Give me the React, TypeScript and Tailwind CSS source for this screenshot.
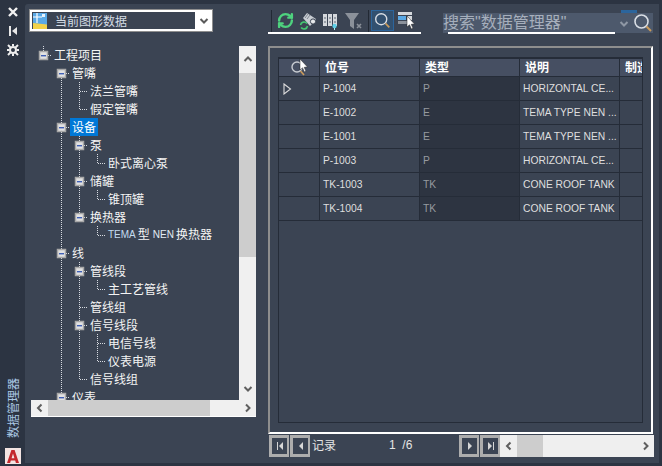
import { RefreshCw } from "lucide-react";

const cjk = "font-['Noto_Sans_CJK_SC','Liberation_Sans',sans-serif]";
const latinFirst = "font-['Liberation_Sans','Noto_Sans_CJK_SC',sans-serif]";

const treeRows: [string, string][] = [
  ["R", "工程项目"],
  [" A", "管嘴"],
  [" |T", "法兰管嘴"],
  [" |L", "假定管嘴"],
  [" B", "设备"],
  [" |B", "泵"],
  [" ||L", "卧式离心泵"],
  [" |B", "储罐"],
  [" ||L", "锥顶罐"],
  [" |E", "换热器"],
  [" | L", "TEMA"],
  [" B", "线"],
  [" |B", "管线段"],
  [" ||L", "主工艺管线"],
  [" |T", "管线组"],
  [" |B", "信号线段"],
  [" ||T", "电信号线"],
  [" ||L", "仪表电源"],
  [" |L", "信号线组"],
  [" B", "仪表"],
];

const gridRows = [
  ["P-1004", "P", "HORIZONTAL CE..."],
  ["E-1002", "E", "TEMA TYPE NEN ..."],
  ["E-1001", "E", "TEMA TYPE NEN ..."],
  ["P-1003", "P", "HORIZONTAL CE..."],
  ["TK-1003", "TK", "CONE ROOF TANK"],
  ["TK-1004", "TK", "CONE ROOF TANK"],
];

// one 18x18 cell of the tree's dotted guides
function TreeCell({ kind }: { kind: string }) {
  const dots = { stroke: "#d8dce2", strokeWidth: 1, strokeDasharray: "1 1" };
  const isBox = "RABE".includes(kind);
  return (
    <svg width="18" height="18" className="shrink-0">
      {"R|TLBE".includes(kind) && (
        <line x1="9.5" y1="0" x2="9.5" y2={kind === "|" || kind === "T" ? 18 : kind === "L" ? 9 : 5} {...dots} />
      )}
      {"AB".includes(kind) && <line x1="9.5" y1="14" x2="9.5" y2="18" {...dots} />}
      {"TL".includes(kind) && <line x1="10" y1="9.5" x2="18" y2="9.5" {...dots} />}
      {isBox && (
        <>
          <line x1="14" y1="9.5" x2="18" y2="9.5" {...dots} />
          <rect x="5.5" y="5.5" width="8" height="8" fill="#e2e2e2" stroke="#a8a8a8" strokeWidth="1.5" />
          <rect x="7" y="9" width="5" height="1.4" fill="#3f5fb5" />
        </>
      )}
    </svg>
  );
}

function Chevron({ dir, className }: { dir: "up" | "down" | "left" | "right"; className?: string }) {
  const pts = {
    up: "1.5,6 5,2.5 8.5,6",
    down: "1.5,3 5,6.5 8.5,3",
    left: "6.5,1.5 3,5 6.5,8.5",
    right: "3,1.5 6.5,5 3,8.5",
  }[dir];
  return (
    <svg width="10" height="10" viewBox="0 0 10 10" className={className}>
      <polyline points={pts} fill="none" stroke="currentColor" strokeWidth="2" />
    </svg>
  );
}

function Magnifier({ size = 20 }: { size?: number }) {
  return (
    <svg width={size} height={size} viewBox="0 0 20 20">
      <circle cx="8.5" cy="8.5" r="6.5" fill="none" stroke="#d9dee5" strokeWidth="1.6" />
      <line x1="13.5" y1="13.5" x2="18" y2="18" stroke="#c99a5b" strokeWidth="2" />
    </svg>
  );
}

function Cursor({ className }: { className?: string }) {
  return (
    <svg width="9" height="14" viewBox="0 0 9 14" className={className}>
      <path d="M1 0 L1 11 L3.5 8.8 L5.4 13 L7 12.3 L5.2 8.3 L8.5 8 Z" fill="#fff" stroke="#222" strokeWidth="0.5" />
    </svg>
  );
}

function NavButton({ glyph, open }: { glyph: "first" | "prev" | "next" | "last"; open?: boolean }) {
  return (
    <div className={`flex h-[22px] w-[20px] shrink-0 items-center justify-center border-[3px] border-r-2 border-[#adadad] ${open ? "border-r-0" : ""}`}>
      <svg width="8" height="8" viewBox="0 0 8 8" fill="#d6d6d6">
        {glyph === "first" && <path d="M1 0h1v8H1zM7 0v8L3 4z" />}
        {glyph === "prev" && <path d="M6 0v8L2 4z" />}
        {glyph === "next" && <path d="M2 0v8l4-4z" />}
        {glyph === "last" && <path d="M1 0v8l4-4zM6 0h1v8H6z" />}
      </svg>
    </div>
  );
}

export default function App() {
  return (
    <div className={`flex h-[466px] w-[662px] overflow-hidden bg-[#2c3442] ${cjk}`}>
      {/* left strip */}
      <div className="flex w-[25px] shrink-0 flex-col items-center pb-[2px] pt-[5px]">
        <svg width="12" height="12" viewBox="0 0 12 12" className="mt-[1px]">
          <path d="M2 2l8 8M10 2l-8 8" stroke="#f2f2f2" strokeWidth="2.4" />
        </svg>
        <svg width="10" height="10" viewBox="0 0 10 10" className="mt-[8px]">
          <path d="M1 0h2v10H1zM9 1v8L4 5z" fill="#e8e8e8" />
        </svg>
        <svg width="12" height="12" viewBox="0 0 12 12" className="mt-[8px]">
          <circle cx="6" cy="6" r="3" fill="none" stroke="#eee" strokeWidth="2" />
          <path d="M1 1l2.6 2.6M11 1L8.4 3.6M1 11l2.6-2.6M11 11L8.4 8.4M6 0v2M6 10v2M0 6h2M10 6h2" stroke="#eee" strokeWidth="2" />
        </svg>
        <div className="mt-auto rotate-180 text-[12px] leading-[14px] text-[#a9c6e2] [text-orientation:sideways] [writing-mode:vertical-rl]">
          数据管理器
        </div>
        <div className="mt-[10px] flex h-[16px] w-[16px] items-center justify-center bg-[#f3e4e2]">
          <svg width="12" height="13" viewBox="0 0 12 13">
            <path d="M4.4 0h3.2L12 13H8.9l-.7-2.4H3.8L3.1 13H0zM6 3.6L4.6 8.2h2.8z" fill="#c4282d" />
          </svg>
        </div>
      </div>

      {/* main panel */}
      <div className="mb-[3px] mr-[3px] mt-[4px] flex flex-1 rounded-tl-[3px] bg-[#3b4453]">
        {/* left column: source selector and tree */}
        <div className="w-[243px] shrink-0">
          <div className="ml-[4px] mt-[5px] flex h-[23px] w-[184px] border border-[#8e8e8e] bg-white">
            <div className="flex flex-1 items-center border-2 border-r-0 border-white bg-[#3b4453] pl-[1px]">
              <svg width="14" height="16" viewBox="0 0 14 16" className="shrink-0">
                <rect width="14" height="16" fill="#5aa9e6" />
                <path d="M0 10l14 1.5V16H0z" fill="#f2d24a" />
                <path d="M4 0v10M0 4h9" stroke="#fff" strokeWidth="1.2" />
                <rect x="9" y="1" width="3" height="3" fill="#e8f2fb" />
              </svg>
              <span className="ml-[8px] text-[12px] text-[#d5dde6]">当前图形数据</span>
            </div>
            <div className="flex w-[17px] items-center justify-center text-[#5a5a5a]">
              <Chevron dir="down" />
            </div>
          </div>

          <div className="ml-[6px] mt-[14px] w-[225px]">
            <div className="flex h-[354px]">
              <div className="flex-1 overflow-hidden pl-[3px]">
                {treeRows.map(([kinds, label], i) => (
                  <div key={i} className="flex h-[18px] items-center whitespace-nowrap text-[12px] leading-[18px] text-[#f4f4f4]">
                    {kinds.split("").map((k, j) => (
                      <TreeCell key={j} kind={k} />
                    ))}
                    {label === "TEMA" ? (
                      <span className={`flex items-center px-[2px] ${latinFirst}`}>
                        <span className="text-[10px] text-[#c4dcf0]">TEMA</span>
                        <span className="ml-[2px]">型</span>
                        <span className="ml-[3px] text-[10px] text-[#e2ecf4]">NEN</span>
                        <span className="ml-[2px]">换热器</span>
                      </span>
                    ) : (
                      <span className={`px-[2px] ${label === "设备" ? "bg-[#0078d7] text-white" : ""}`}>{label}</span>
                    )}
                  </div>
                ))}
              </div>
              <div className="flex w-[17px] shrink-0 flex-col bg-[#f0f0f0] text-[#5f5f5f]">
                <div className="flex h-[27px] items-center justify-center">
                  <Chevron dir="up" />
                </div>
                <div className="h-[184px] bg-[#cdcdcd]" />
                <div className="mb-[3px] mt-auto flex h-[17px] items-center justify-center">
                  <Chevron dir="down" />
                </div>
              </div>
            </div>
            <div className="flex h-[17px] items-center border-b border-white bg-[#f0f0f0] text-[#5f5f5f]">
              <div className="flex w-[17px] justify-center">
                <Chevron dir="left" />
              </div>
              <div className="h-full w-[162px] bg-[#cdcdcd]" />
              <div className="ml-auto flex w-[17px] justify-center">
                <Chevron dir="right" />
              </div>
            </div>
          </div>
        </div>

        {/* right column: toolbar, grid, pager */}
        <div className="w-[385px] shrink-0">
          <div className="flex h-[42px]">
            <div className="mt-[6px] flex h-[24px] w-[153px] items-center border-b-2 border-white pb-[1px]">
              <div className="ml-[3px] h-[22px] w-[1px] bg-[#222934]" />
              <RefreshCw size={17} strokeWidth={3.4} className="ml-[5px] text-[#4ed27e]" />
              <svg width="18" height="18" viewBox="0 0 18 18" className="ml-[5px]">
                <path d="M4 6l4-5 9 6-2 3-4 4z" fill="#c9ced4" />
                <path d="M6 6l3-4M8 7l3-4" stroke="#7d8590" />
                <circle cx="14" cy="9.5" r="2.6" fill="#e6e8ea" stroke="#3b4453" />
                <path d="M1.5 13a3.6 3.6 0 016.4-1.6M8.5 14a3.6 3.6 0 01-6.4 1.6" fill="none" stroke="#44c873" strokeWidth="1.6" />
              </svg>
              <svg width="16" height="18" viewBox="0 0 16 18" className="ml-[6px]">
                <path d="M0 2h4v12H0zM5 2h4v12H5zM10 2h4v12h-4z" fill="#d5d8dc" />
                <path d="M1 6h2M1 10h2M6 6h2M6 10h2M11 6h2M11 10h2" stroke="#5d6673" />
                <circle cx="11.5" cy="14" r="2.2" fill="#5fd0e8" />
                <rect x="11" y="16" width="1" height="2" fill="#aee" />
              </svg>
              <svg width="18" height="18" viewBox="0 0 18 18" className="ml-[6px]">
                <path d="M0 1h14L9 8v9l-4-3V8z" fill="#8b919a" />
                <path d="M12 12l4 4M16 12l-4 4" stroke="#8b919a" strokeWidth="1.6" />
              </svg>
              <div className="ml-[5px] h-[22px] w-[1px] bg-[#222934]" />
              <div className="ml-[2px] flex h-[21px] w-[23px] items-center justify-center border border-[#2c659c] bg-[#32506f]">
                <Magnifier size={17} />
              </div>
              <div className="relative ml-[4px] h-[17px] w-[16px]">
                <svg width="14" height="12" viewBox="0 0 14 12">
                  <rect width="14" height="3" fill="#d5d8dc" />
                  <rect y="4" width="8" height="4" fill="#5aa9e6" />
                  <rect x="9" y="4" width="5" height="4" fill="#d5d8dc" />
                  <rect y="9" width="14" height="3" fill="#8b919a" />
                </svg>
                <Cursor className="absolute left-[8px] top-[4px]" />
              </div>
            </div>
            <div className="relative ml-[22px] mt-[9px] flex h-[20px] w-[210px] items-center bg-[#4d596c]">
              <div className="absolute -top-[3px] left-[178px] h-[3px] w-[16px] bg-[#2c659c]" />
              <span className={`whitespace-nowrap text-[16px] leading-[20px] text-[#a6afbc] ${latinFirst}`}>搜索"数据管理器"</span>
              <Chevron dir="down" className="absolute left-[176px] top-[6px] text-[#8f98a5]" />
              <div className="absolute right-[0px] top-[0px]">
                <Magnifier size={20} />
              </div>
              <div className="absolute left-[5px] top-[19px] h-[2px] w-[167px] bg-white" />
            </div>
          </div>

          <div className="h-[388px] border-2 border-b-white border-l-[#8e8e8e] border-r-white border-t-[#8e8e8e] pb-[9px] pl-[8px] pr-[8px] pt-[9px]">
            <div className="h-full overflow-hidden border border-t-2 border-[#252c38] bg-[#3b4453] text-[10.3px] text-[#dfdfdf] font-['Liberation_Sans',sans-serif]">
              <div className="flex h-[18px] border-b border-[#252c38] bg-[#464f62] text-[12px] font-bold leading-[16px] text-white">
                <div className="relative w-[41px] shrink-0 border-r border-[#252c38]">
                  <svg width="16" height="16" viewBox="0 0 16 16" className="absolute left-[11px] top-[1px]">
                    <circle cx="7" cy="7" r="5" fill="none" stroke="#c8ccd2" strokeWidth="1.4" />
                    <line x1="10.5" y1="11" x2="14" y2="15" stroke="#c99a5b" strokeWidth="1.6" />
                  </svg>
                  <Cursor className="absolute left-[20px] top-[0px]" />
                </div>
                {["位号", "类型", "说明"].map((h) => (
                  <div key={h} className={`w-[100px] shrink-0 border-r border-[#252c38] pl-[5px] ${cjk}`}>
                    {h}
                  </div>
                ))}
                <div className={`flex-1 overflow-hidden whitespace-nowrap pl-[5px] ${cjk}`}>制造商</div>
              </div>
              {gridRows.map(([tag, type, desc], i) => (
                <div key={tag} className="flex h-[24px] border-b border-[#252c38] leading-[23px]">
                  <div className="flex w-[41px] shrink-0 items-center border-r border-[#252c38] pl-[4px]">
                    {i === 0 && (
                      <svg width="9" height="12" viewBox="0 0 9 12">
                        <path d="M1 1l6.5 5L1 11z" fill="none" stroke="#dcdcdc" strokeWidth="1.1" />
                      </svg>
                    )}
                  </div>
                  <div className="w-[100px] shrink-0 border-r border-[#252c38] pl-[3px]">{tag}</div>
                  <div className="w-[100px] shrink-0 border-r border-[#252c38] bg-[#2d3441] pl-[3px] text-[#969a9f]">{type}</div>
                  <div className="w-[100px] shrink-0 whitespace-nowrap border-r border-[#252c38] pl-[3px]">{desc}</div>
                  <div className="flex-1" />
                </div>
              ))}
            </div>
          </div>

          <div className="mt-[1px] flex h-[22px] pl-[1px] text-[12px] leading-[20px] text-[#e4e4e4]">
            <NavButton glyph="first" />
            <div className="ml-[1px]">
              <NavButton glyph="prev" open />
            </div>
            <span className="ml-[2px] w-[24px] shrink-0">记录</span>
            <span className="ml-[53px] w-[23px] shrink-0 whitespace-pre font-['Liberation_Sans',sans-serif]">1  /6</span>
            <div className="ml-[47px]">
              <NavButton glyph="next" />
            </div>
            <div className="ml-[1px]">
              <NavButton glyph="last" open />
            </div>
            <div className="flex h-[22px] w-[154px] shrink-0 items-center bg-[#efefef] text-[#5f5f5f]">
              <div className="flex w-[17px] justify-center">
                <Chevron dir="left" />
              </div>
              <div className="h-full w-[26px] bg-[#cdcdcd]" />
              <div className="ml-auto flex w-[17px] justify-center">
                <Chevron dir="right" />
              </div>
            </div>
          </div>
        </div>
      </div>
    </div>
  );
}
